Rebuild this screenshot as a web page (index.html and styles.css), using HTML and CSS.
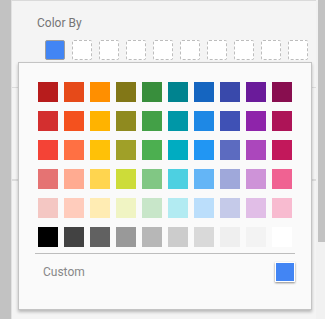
FILE: index.html
```html
<!DOCTYPE html>
<html>
    <head>
        <title>Color By</title>
        <link rel="stylesheet" href="styles.css">
    </head>
    <body>
        <div class="side"></div>
        <div class="panel">
            <div class="section first">
                <div class="label">Color By</div>
                <div class="slots">
                    <div class="slot filled"></div>
                    <div class="slot"></div>
                    <div class="slot"></div>
                    <div class="slot"></div>
                    <div class="slot"></div>
                    <div class="slot"></div>
                    <div class="slot"></div>
                    <div class="slot"></div>
                    <div class="slot"></div>
                    <div class="slot"></div>
                </div>
            </div>
            <div class="section middle"></div>
            <div class="section"></div>

            <div class="picker">
                <div class="palette" id="palette"></div>
                <div class="divider"></div>
                <div class="custom">
                    <span>Custom</span>
                    <div class="current"></div>
                </div>
            </div>
        </div>
        <div class="scroll"><div class="thumb"></div></div>
        <script>
            const colors = [
                '#b71c1c', '#e64a19', '#ff8f00', '#827717', '#388e3c', '#00838f', '#1565c0', '#3949ab', '#6a1b9a', '#880e4f',
                '#d32f2f', '#f4511e', '#ffb300', '#8f8a1f', '#43a047', '#0097a7', '#1e88e5', '#3f51b5', '#8e24aa', '#ad1457',
                '#f44336', '#ff7043', '#ffc107', '#a0a028', '#4caf50', '#00acc1', '#2196f3', '#5c6bc0', '#ab47bc', '#c2185b',
                '#e57373', '#ffab91', '#ffd54f', '#cddc39', '#81c784', '#4dd0e1', '#64b5f6', '#9fa8da', '#ce93d8', '#f06292',
                '#f4c7c3', '#ffccbc', '#ffecb3', '#f0f4c3', '#c8e6c9', '#b2ebf2', '#bbdefb', '#c5cae9', '#e1bee7', '#f8bbd0',
                '#000000', '#424242', '#616161', '#999999', '#b7b7b7', '#cccccc', '#d9d9d9', '#efefef', '#f3f3f3', '#ffffff'
            ];
            const palette = document.getElementById('palette');
            colors.forEach(color => {
                const cell = document.createElement('div');
                cell.className = 'cell';
                cell.style.background = color;
                palette.appendChild(cell);
            });
        </script>
    </body>
</html>
```

FILE: styles.css
```css
body
{
    margin:0;
    width:325px;
    height:319px;
    display:flex;
    background:#c2c2c2;
    font-family: Roboto, sans-serif;
    overflow:hidden;
}
.side
{
    width:11px;
    flex-shrink:0;
    background:#c2c2c2;
}
.panel
{
    position:relative;
    flex:1;
    background:#f4f4f4;
    border-left:1px solid #e2e2e2;
    border-top:1px solid #dadada;
}
.section
{
    border-bottom:1px solid #dcdcdc;
}
.section.first
{
    height:87px;
    padding-left:25px;
    box-sizing:border-box;
    padding-top:15px;
}
.section.middle
{
    height:91px;
}
.label
{
    font-size:12px;
    line-height:14px;
    color:#757575;
}
.slots
{
    display:flex;
    gap:7px;
    margin-top:10px;
    margin-left:8px;
}
.slot
{
    width:18px;
    height:18px;
    border:1px dashed #bdbdbd;
    border-radius:2px;
    background:#fff;
}
.slot.filled
{
    background:#4285f4;
    border:1px solid #9e9e9e;
}
.picker
{
    position:absolute;
    left:6px;
    top:61px;
    width:294px;
    height:248px;
    box-sizing:border-box;
    background:#fafafa;
    border:1px solid #c4c4c4;
    box-shadow: 0 2px 3px rgba(0,0,0,0.25);
    padding:19px 16px 0 19px;
}
.palette
{
    display:grid;
    grid-template-columns: repeat(10,20px);
    column-gap:6px;
    row-gap:9px;
}
.cell
{
    width:20px;
    height:20px;
}
.divider
{
    margin-top:6px;
    margin-left:-3px;
    height:1px;
    background:#bdbdbd;
}
.custom
{
    display:flex;
    justify-content:space-between;
    align-items:center;
    margin-top:8px;
    padding-left:5px;
}
.custom span
{
    font-size:12px;
    color:#888;
}
.current
{
    width:18px;
    height:18px;
    background:#4285f4;
    border:1px solid #fff;
    box-shadow: 0 1px 2px rgba(0,0,0,0.45);
}
.scroll
{
    width:9px;
    flex-shrink:0;
    background:#f1f1f1;
    display:flex;
    justify-content:flex-end;
}
.thumb
{
    width:7px;
    height:242px;
    background:#c2c2c2;
}
```
